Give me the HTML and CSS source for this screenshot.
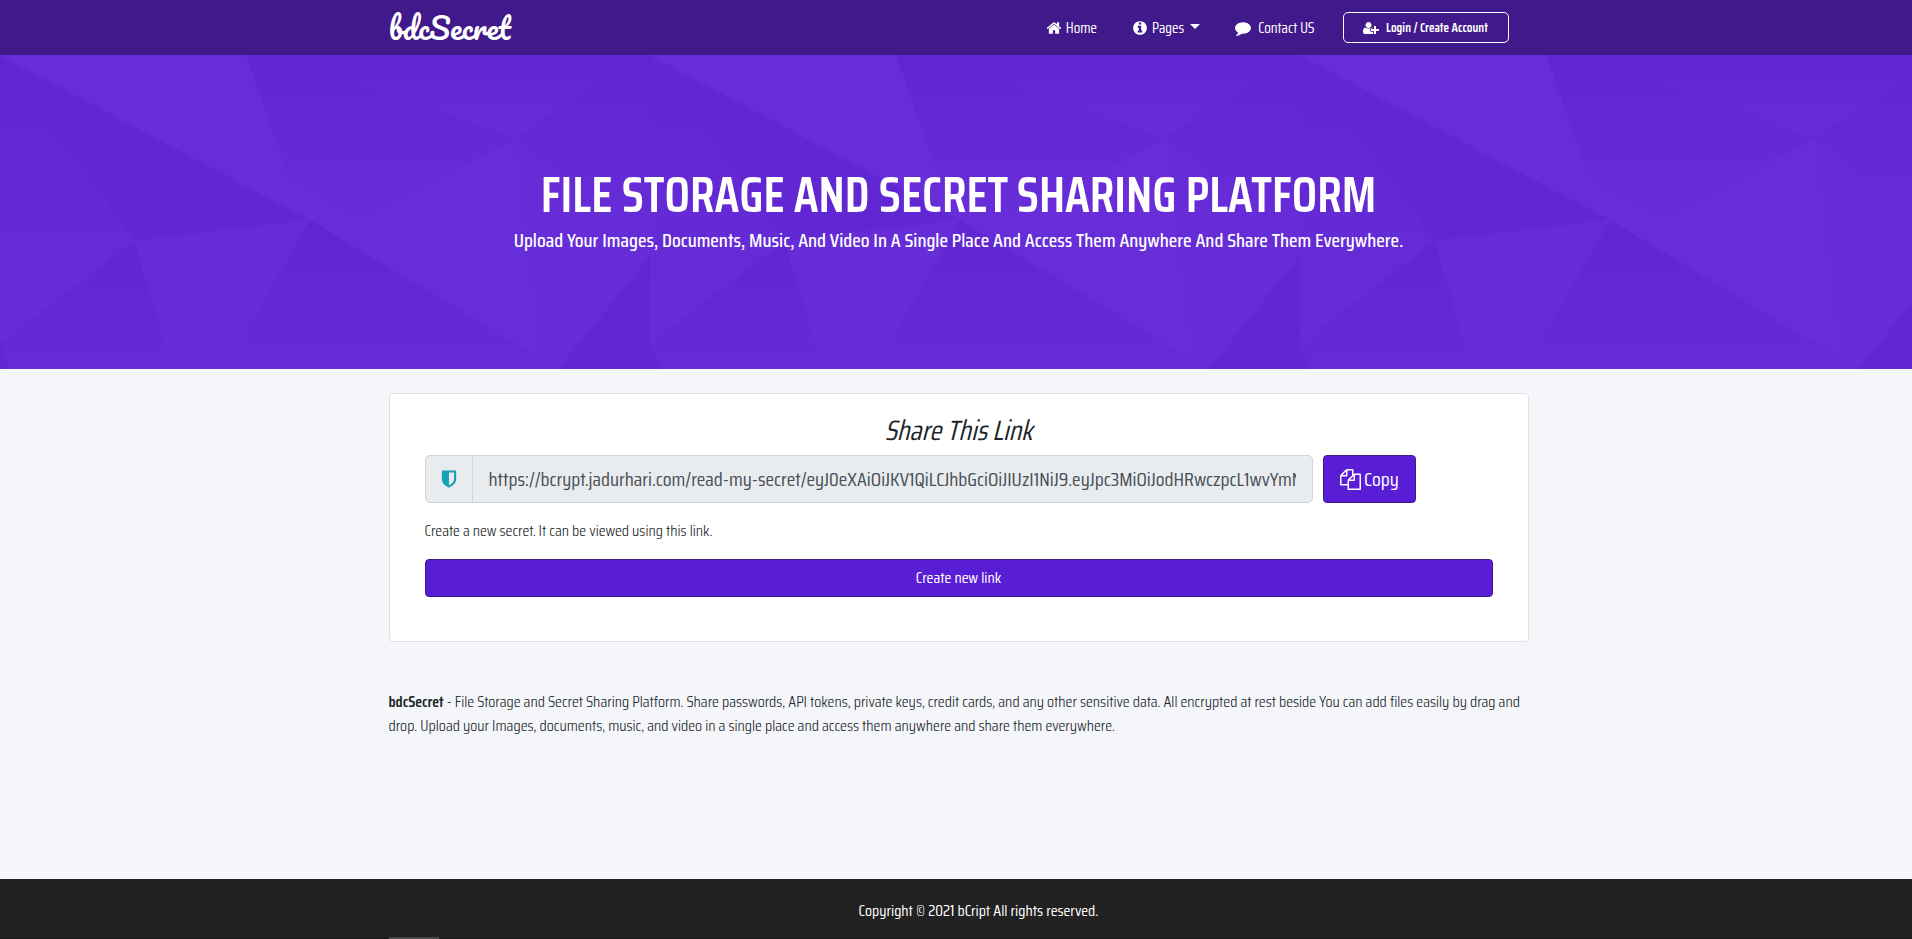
FILE: index.html
```html
<!DOCTYPE html>
<html lang="en">

<head>
    <meta charset="UTF-8">
    <meta name="viewport" content="width=device-width, initial-scale=1">
    <title>bdcSecret</title>
    <link rel="stylesheet" href="styles.css">
</head>

<body>
    <header class="navbar">
        <div class="container navbar-inner">
            <a href="#" class="brand">bdcSecret</a>
            <nav class="nav">
                <a href="#" class="nav-link">
                    <svg class="icon" viewBox="0 0 1792 1792"><path d="M1472 992v480q0 26-19 45t-45 19h-384v-384h-256v384h-384q-26 0-45-19t-19-45v-480q0-1 .5-3t.5-3l575-474 575 474q1 2 1 6zm223-69l-62 74q-8 9-21 11h-3q-13 0-21-7l-692-577-692 577q-12 8-24 7-13-2-21-11l-62-74q-8-10-7-23.5t11-21.5l719-599q32-26 76-26t76 26l244 204v-195q0-14 9-23t23-9h192q14 0 23 9t9 23v408l219 182q10 8 11 21.5t-7 23.5z"/></svg>
                    <span>Home</span>
                </a>
                <a href="#" class="nav-link">
                    <svg class="icon" viewBox="0 0 1792 1792"><path d="M1152 1376v-160q0-14-9-23t-23-9h-96v-512q0-14-9-23t-23-9h-320q-14 0-23 9t-9 23v160q0 14 9 23t23 9h96v320h-96q-14 0-23 9t-9 23v160q0 14 9 23t23 9h448q14 0 23-9t9-23zm-128-896v-160q0-14-9-23t-23-9h-192q-14 0-23 9t-9 23v160q0 14 9 23t23 9h192q14 0 23-9t9-23zm640 416q0 209-103 385.5t-279.5 279.5-385.5 103-385.5-103-279.5-279.5-103-385.5 103-385.5 279.5-279.5 385.5-103 385.5 103 279.5 279.5 103 385.5z"/></svg>
                    <span>Pages</span>
                    <span class="caret"></span>
                </a>
                <a href="#" class="nav-link nav-contact">
                    <svg class="icon" viewBox="0 0 1792 1792"><path d="M1792 896q0 174-120 321.5t-326 233-450 85.5q-70 0-145-8-198 175-460 242-49 14-114 22-17 2-30.5-9t-17.5-29v-1q-3-4-.5-12t2-10 4.5-9.5l6-9 7-8.5 8-9q7-8 31-34.5t34.5-38 31-39.5 32.5-51 27-59 26-76q-157-89-247.5-220t-90.5-281q0-130 71-248.5t191-204.5 286-136.5 348-50.5q244 0 450 85.5t326 233 120 321.5z"/></svg>
                    <span>Contact US</span>
                </a>
                <a href="#" class="btn-login">
                    <svg class="icon" viewBox="0 0 2048 1792"><path d="M704 896q-159 0-271.5-112.5t-112.5-271.5 112.5-271.5 271.5-112.5 271.5 112.5 112.5 271.5-112.5 271.5-271.5 112.5zm960 128h352q13 0 22.5 9.5t9.5 22.5v192q0 13-9.5 22.5t-22.5 9.5h-352v352q0 13-9.5 22.5t-22.5 9.5h-192q-13 0-22.5-9.5t-9.5-22.5v-352h-352q-13 0-22.5-9.5t-9.5-22.5v-192q0-13 9.5-22.5t22.5-9.5h352v-352q0-13 9.5-22.5t22.5-9.5h192q13 0 22.5 9.5t9.5 22.5v352zm-736 224q0 52 38 90t90 38h256v238q-68 50-171 50h-874q-121 0-194-69t-73-190q0-53 3.5-103.5t14-109 26.5-108.5 43-97.5 62-81 85.5-53.5 111.5-20q19 0 39 17 79 61 154.5 91.5t164.5 30.5 164.5-30.5 154.5-91.5q20-17 39-17 132 0 217 96h-223q-52 0-90 38t-38 90v192z"/></svg>
                    <span>Login / Create Account</span>
                </a>
            </nav>
        </div>
    </header>

    <section class="hero">
        <h1>FILE STORAGE AND SECRET SHARING PLATFORM</h1>
        <p>Upload Your Images, Documents, Music, And Video In A Single Place And Access Them Anywhere And Share Them Everywhere.</p>
    </section>

    <main class="container main">
        <div class="card">
            <h2><label for="link">Share This Link</label></h2>
            <div class="share-row">
                <div class="input-group">
                    <span class="addon">
                        <svg class="icon" viewBox="0 0 1792 1792"><path d="M1344 960v-640h-448v1137q119-63 213-137 235-184 235-360zm192-768v768q0 86-33.5 170.5t-83 150-118 127.5-126.5 103-121 77.5-89.5 49.5-42.5 20q-12 6-26 6t-26-6q-16-7-42.5-20t-89.5-49.5-121-77.5-126.5-103-118-127.5-83-150-33.5-170.5v-768q0-26 19-45t45-19h1152q26 0 45 19t19 45z"/></svg>
                    </span>
                    <input type="text" id="link" readonly value="https://bcrypt.jadurhari.com/read-my-secret/eyJ0eXAiOiJKV1QiLCJhbGciOiJIUzI1NiJ9.eyJpc3MiOiJodHRwczpcL1wvYmNyeXB0">
                </div>
                <button type="button" class="btn btn-copy">
                    <svg class="icon" viewBox="0 0 1792 1792"><path d="M1696 384q40 0 68 28t28 68v1216q0 40-28 68t-68 28h-960q-40 0-68-28t-28-68v-288h-544q-40 0-68-28t-28-68v-672q0-40 20-88t48-76l408-408q28-28 76-48t88-20h416q40 0 68 28t28 68v328q68-40 128-40h416zm-544 213l-299 299h299v-299zm-640-384l-299 299h299v-299zm196 647l316-316v-416h-384v416q0 40-28 68t-68 28h-416v640h512v-256q0-40 20-88t48-76zm956 804v-1152h-384v416q0 40-28 68t-68 28h-416v640h896z"/></svg>
                    <span>Copy</span>
                </button>
            </div>
            <p>Create a new secret. It can be viewed using this link.</p>
            <button type="button" class="btn btn-block">Create new link</button>
        </div>

        <p class="about"><strong>bdcSecret</strong> - File Storage and Secret Sharing Platform. Share passwords, API tokens, private keys, credit cards, and any other sensitive data. All encrypted at rest beside You can add files easily by drag and drop. Upload your Images, documents, music, and video in a single place and access them anywhere and share them everywhere.</p>
    </main>

    <footer class="footer">
        <p>Copyright © 2021 bCript All rights reserved.</p>
        <div class="footer-bar">
            <div class="container">
                <div class="footer-tab"></div>
            </div>
        </div>
    </footer>
</body>

</html>
```

FILE: styles.css
```css
* {
    box-sizing: border-box;
}

html {
    overflow-x: hidden;
}

body {
    width: calc(100% + 5px);
    margin: 0;
    min-height: 100vh;
    display: flex;
    flex-direction: column;
    background: #f4f6fa;
    color: #212529;
    font-family: "Saira Condensed", "Liberation Sans Narrow", "Liberation Sans", sans-serif;
    font-size: 16px;
    font-weight: 300;
    line-height: 24px;
}

h1, h2, p {
    margin: 0;
}

strong {
    font-weight: 600;
}

a {
    color: #fff;
    text-decoration: none;
}

.container {
    width: 100%;
    max-width: 1140px;
    margin: 0 auto;
}

.icon {
    width: 16px;
    height: 16px;
    fill: currentColor;
    flex: none;
}

/* navbar */
.navbar {
    background: #40198a;
}

.navbar-inner {
    display: flex;
    align-items: center;
    justify-content: space-between;
    height: 55px;
    padding-right: 20px;
}

.brand {
    font-family: "Pacifico", "Lobster", "Lato", cursive;
    font-size: 30px;
    font-weight: 400;
}

.nav {
    display: flex;
    align-items: center;
    gap: 35px;
    font-size: 15px;
    font-weight: 400;
}

.nav-link {
    display: flex;
    align-items: center;
    gap: 4px;
}

.nav-contact {
    gap: 7px;
    margin-right: -7px;
}

.caret {
    margin: 0 0 2px 2px;
    border-top: 5px solid #fff;
    border-left: 5px solid transparent;
    border-right: 5px solid transparent;
}

.btn-login {
    display: flex;
    align-items: center;
    justify-content: center;
    gap: 7px;
    min-width: 166px;
    height: 31px;
    border: 1px solid #fff;
    border-radius: 5px;
    font-size: 13px;
    font-weight: 600;
}

/* hero */
.hero {
    display: flex;
    flex-direction: column;
    align-items: center;
    height: 314px;
    padding-top: 110px;
    color: #fff;
    text-align: center;
    background: #632ad6 url("data:image/svg+xml,%3Csvg xmlns='http://www.w3.org/2000/svg' width='650' height='314'%3E%3Cdefs%3E%3ClinearGradient id='d' x2='0' y2='1'%3E%3Cstop stop-color='%235f26d1'/%3E%3Cstop offset='1' stop-color='%23642bd7'/%3E%3C/linearGradient%3E%3ClinearGradient id='l' x2='0' y2='1'%3E%3Cstop stop-color='%235f26d2'/%3E%3Cstop offset='1' stop-color='%23662dd9'/%3E%3C/linearGradient%3E%3C/defs%3E%3Cpath fill='url(%23l)' d='M0 0L50 70L135 186L0 288z'/%3E%3Cpath fill='%236027d2' d='M0 0L310 165L135 186L50 70z'/%3E%3Cpath fill='%23662dd9' d='M0 0H246L288 120L360 165L516 83L545 314L310 165z'/%3E%3Cpath fill='url(%23l)' d='M246 0H280L516 83L360 165L288 120z'/%3E%3Cpath fill='url(%23l)' d='M280 0H640L516 83z'/%3E%3Cpath fill='url(%23l)' d='M650 0V200L516 83L640 0z'/%3E%3Cpath fill='%23652cd8' d='M516 83L650 200L558 314H545z'/%3E%3Cpath fill='%236027d2' d='M650 200V314H558z'/%3E%3Cpath fill='url(%23d)' d='M135 186L172 314H10L0 288z'/%3E%3Cpath fill='%23652cd8' d='M135 186L310 165L225 314H172z'/%3E%3Cpath fill='url(%23d)' d='M310 165L558 314H225z'/%3E%3Cpath fill='%236027d2' d='M0 288L10 314H0z'/%3E%3C/svg%3E") repeat-x;
}

.hero h1 {
    font-size: 50px;
    line-height: 60px;
    font-weight: 600;
}

.hero p {
    font-size: 20px;
    line-height: 30px;
    font-weight: 500;
}

/* share card */
.main {
    flex: 1;
    padding: 24px 0;
}

.card {
    padding: 18px 35px 44px;
    background: #fff;
    border: 1px solid #dcdfe4;
    border-radius: 4px;
}

.card h2 {
    margin-bottom: 7px;
    font-size: 28px;
    line-height: 36px;
    font-weight: 400;
    font-style: italic;
    text-align: center;
}

.card p {
    margin: 16px 0;
}

.share-row {
    display: flex;
    gap: 10px;
}

.input-group {
    display: flex;
    width: 83.2%;
    height: 48px;
    border: 1px solid #ced4da;
    border-radius: 5px;
    background: #e9ecef;
}

.addon {
    display: flex;
    align-items: center;
    justify-content: center;
    width: 47px;
    border-right: 1px solid #ced4da;
    color: #17a2b8;
}

.addon .icon {
    width: 20px;
    height: 20px;
}

.input-group input {
    flex: 1;
    min-width: 0;
    margin: 0 16px;
    padding: 0;
    border: 0;
    background: none;
    color: #495057;
    font: inherit;
    font-size: 20px;
    font-weight: 400;
}

.btn {
    display: flex;
    align-items: center;
    justify-content: center;
    gap: 3px;
    border: 1px solid #40198a;
    border-radius: 4px;
    background: #5a1dd6;
    color: #fff;
    font: inherit;
    font-weight: 400;
    cursor: pointer;
}

.btn-copy {
    padding: 0 16px;
    font-size: 20px;
}

.btn-copy .icon {
    width: 21px;
    height: 21px;
}

.btn-block {
    width: 100%;
    height: 38px;
}

.about {
    margin-top: 48px;
}

/* footer */
.footer {
    background: #222;
    color: #fff;
    text-align: center;
}

.footer p {
    padding: 20px 0 14px 40px;
    font-weight: 400;
}

.footer-bar {
    background: #1b1b1b;
}

.footer-tab {
    width: 50px;
    height: 2px;
    background: #4a4a4a;
}
```
